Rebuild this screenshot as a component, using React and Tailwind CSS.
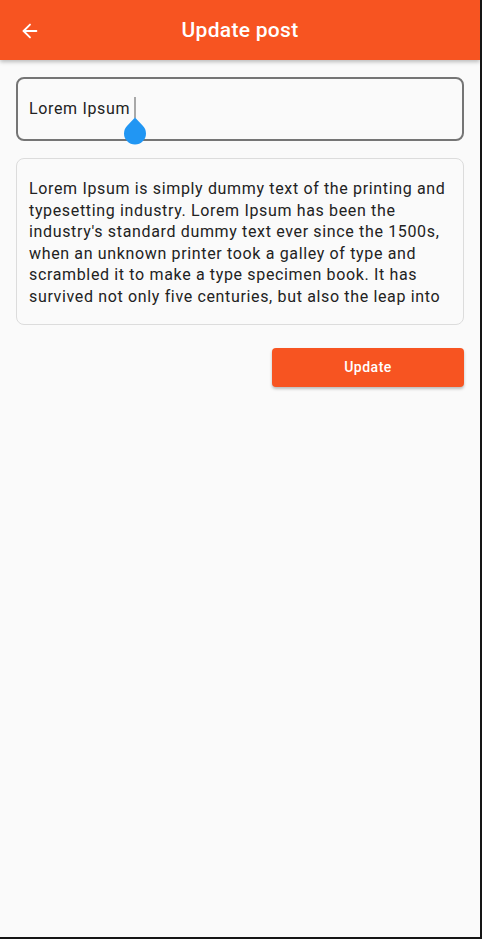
import { ArrowLeft } from 'lucide-react'

const body = "Lorem Ipsum is simply dummy text of the printing and typesetting industry. Lorem Ipsum has been the industry's standard dummy text ever since the 1500s, when an unknown printer took a galley of type and scrambled it to make a type specimen book. It has survived not only five centuries, but also the leap into"

export default function App() {
  return (
    <div
      className="w-[482px] h-[939px] border-r-2 border-b-2 border-[#151515] bg-[#fafafa] flex flex-col overflow-hidden"
      style={{ fontFamily: 'Roboto, "Noto Sans", sans-serif' }}
    >
      {/* App bar */}
      <header className="relative z-10 h-[60px] bg-[#f75421] flex items-center shadow-[0_2px_4px_rgba(0,0,0,0.25)]">
        <button className="w-[60px] h-[60px] flex items-center justify-center text-white pt-[1px]">
          <ArrowLeft className="w-[22px] h-[22px]" strokeWidth={2} />
        </button>
        <h1 className="absolute left-0 right-0 pt-[2px] text-center text-white text-[21px] tracking-[0.3px] font-medium pointer-events-none">
          Update post
        </h1>
      </header>

      <main className="px-4 pt-[17px] flex flex-col">
        {/* Title field */}
        <div className="h-[64px] rounded-[8px] border-2 border-[#757575] flex items-center pl-[11px]">
          <span className="text-[16px] tracking-[0.65px] text-[#222]">Lorem Ipsum</span>
          <span className="relative ml-[4px] mb-[3px] w-[2px] h-[21px] bg-[#a8a8a8]">
            <svg
              className="absolute left-[-12px] top-[19px]"
              width="26"
              height="30"
              viewBox="0 0 26 30"
            >
              <path d="M13 1.5 L20.8 9.7 A11 11 0 1 1 5.2 9.7 Z" fill="#2196f3" />
            </svg>
          </span>
        </div>

        {/* Body field */}
        <div className="mt-[17px] h-[167px] rounded-[8px] border border-[#dcdcdc] pl-[12px] pr-[10px] pt-[19px] text-[16px] tracking-[0.65px] leading-[21.6px] text-[#222]">
          {body}
        </div>

        {/* Action */}
        <div className="mt-[23px] flex justify-end">
          <button className="w-[192px] h-[39px] rounded-[4px] bg-[#f75421] text-white text-[14px] tracking-[0.5px] font-medium shadow-[0_2px_3px_rgba(0,0,0,0.25)]">
            Update
          </button>
        </div>
      </main>
    </div>
  )
}
